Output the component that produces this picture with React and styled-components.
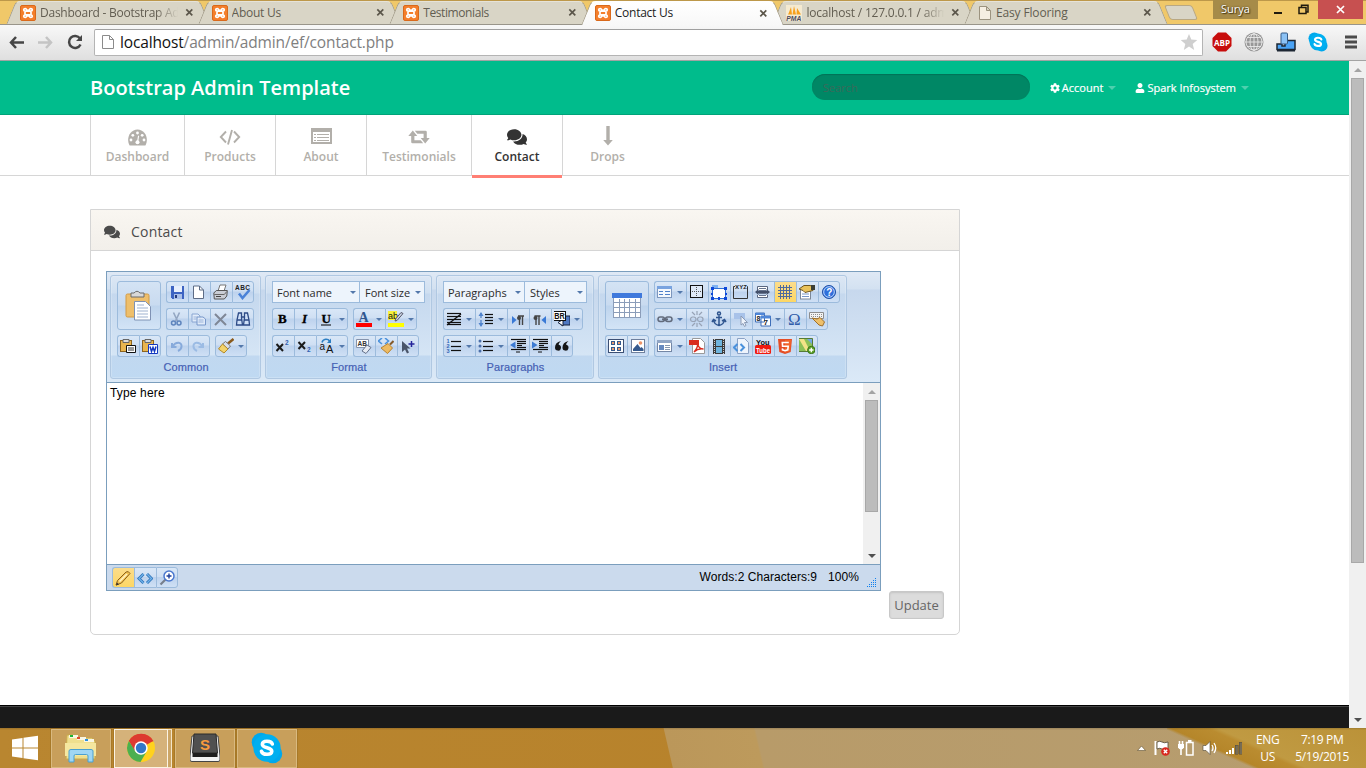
import React from "react";
import styled, { createGlobalStyle, css } from "styled-components";
import { FaComments, FaCog, FaUser } from "react-icons/fa";

const Global = createGlobalStyle`
  *, *::before, *::after { box-sizing: border-box; }
  body { margin: 0; overflow: hidden; background: #fff; font-family: "Open Sans", sans-serif; }
  svg { display: block; flex: none; }
`;

const Screen = styled.div`
  width: 1366px; height: 768px; display: flex; flex-direction: column; overflow: hidden;
`;

/* ---------- browser chrome ---------- */
const TabStrip = styled.div`
  height: 25px; flex: none; display: flex; align-items: flex-start; padding-left: 11px;
  background: #f0c869; border-top: 1px solid #bd984a; box-shadow: inset 0 -1px #99958a;
`;
const tabHalf = css`
  content: ""; position: absolute; z-index: -1; top: 0; bottom: 0; width: 60%;
  background: ${p => (p.$active ? "linear-gradient(#fff, #f8f8f8)" : "#d9d5c6")};
  border: 0 solid ${p => (p.$active ? "#a9a291" : "#a39d8c")}; border-top-width: 1px; border-top-color: ${p => (p.$active ? "#fff" : "#e6e3d8")};
`;
const Tab = styled.div`
  position: relative; z-index: ${p => (p.$active ? 2 : 1)}; isolation: isolate;
  width: 191.6px; height: ${p => (p.$active ? 24 : 23)}px; flex: none;
  display: flex; align-items: center; padding: 0 9px 0 9px; gap: 4px;
  color: ${p => (p.$active ? "#1c1c1c" : "#625d51")};
  &::before { ${tabHalf} left: 0; border-left-width: 1px; border-top-left-radius: 5px; transform: skewX(-22deg); }
  &::after { ${tabHalf} right: -2px; border-right-width: 1px; border-top-right-radius: 5px; transform: skewX(22deg); }
`;
const TabTitle = styled.span`
  flex: 1; min-width: 0; overflow: hidden; white-space: nowrap; font: 12px/16px "Open Sans", sans-serif;
  letter-spacing: ${p => p.$ls ?? -0.25}px;
  ${p => p.$fade && css`mask-image: linear-gradient(90deg, #000 82%, transparent 98%);`}
`;
const NewTab = styled.div`
  width: 28px; height: 15px; margin: 4px 0 0 6px; background: #d9d5c6; border: 1px solid #b9a883; border-radius: 3px;
  transform: skewX(22deg);
`;
const WindowControls = styled.div`
  margin: -1px 3px 0 auto; display: flex; height: 19px; align-items: stretch;
`;
const UserBadge = styled.div`
  width: 45px; margin-right: 15px; background: #a68b49; color: #fff; font: 11px/18px "Open Sans", sans-serif; text-align: center;
  text-shadow: 0 0 2px #4a3b14, 1px 1px 1px #4a3b14;
`;
const WindowButton = styled.div`
  width: ${p => p.$w}px; padding-left: ${p => p.$pl || 0}px; display: flex; align-items: center; justify-content: center; background: ${p => p.$bg || "transparent"};
`;
const Toolbar = styled.div`
  height: 36px; flex: none; display: flex; align-items: center; padding: 0 8px 1px;
  background: linear-gradient(#f8f8f8, #dfdfdf); border-bottom: 1px solid #a3a3a3;
`;
const NavButtons = styled.div`display: flex; gap: 12px; width: 86px; align-items: center;`;
const Omnibox = styled.div`
  width: 1109px; height: 27px; display: flex; align-items: center; padding: 0 4px 0 6px; background: #fff;
  border: 1px solid #b4b4b4; border-top-color: #a0a0a0; border-radius: 2px;
`;
const Url = styled.div`
  flex: 1; margin-left: 5px; font: 15.5px/24px "Open Sans", sans-serif; letter-spacing: -0.15px; color: #808080;
  b { font-weight: 400; color: #111; }
`;
const Extensions = styled.div`display: flex; align-items: center; margin-left: 9px; gap: 12px; > :last-child { margin-left: 4px; }`;

/* ---------- scrollbars ---------- */
const Scrollbar = styled.div`
  width: 17px; flex: none; display: flex; flex-direction: column; align-items: center; background: #f0f0f0;
`;
const ScrollArrow = styled.div`
  height: 17px; width: 100%; display: flex; align-items: center; justify-content: center;
  &::before { content: ""; border: 4px solid transparent;
    ${p => p.$down ? "border-top-color:#505050;border-bottom:0;" : "border-bottom-color:#a3a3a3;border-top:0;"} }
`;
const Thumb = styled.div`width: 13px; height: ${p => p.$h}px; background: #bcbcbc; border: 1px solid #a8a8a8;`;
const Filler = styled.div`flex: 1;`;

/* ---------- page ---------- */
const Viewport = styled.div`height: 667px; flex: none; display: flex;`;
const Page = styled.div`flex: 1; display: flex; flex-direction: column;`;
const Header = styled.header`
  height: 54px; flex: none; display: flex; align-items: center; padding: 0 100px 0 90px;
  background: #00bc8c; border-bottom: 1px solid #00a379; color: #fff;
`;
const Brand = styled.h1`margin: 0 auto 0 0; font: 600 20px/27px "Open Sans", sans-serif;`;
const SearchBox = styled.input.attrs({ placeholder: "Search" })`
  width: 218px; height: 26px; margin: -1px 20px 0 0; padding: 0 11px; border: 0; border-radius: 13px; background: #008765;
  box-shadow: inset 0 1px 1px #007357; font: 11px "Open Sans", sans-serif; outline: 0;
  &::placeholder { color: #3a6a5b; opacity: 1; }
`;
const UserLink = styled.div`
  display: flex; align-items: center; gap: 2px; margin-right: ${p => p.$mr || 0}px; white-space: nowrap;
  font: 11px/16px "Open Sans", sans-serif; letter-spacing: 0.01px; padding-top: 1px; -webkit-text-stroke: 0.2px #fff;
  &::after { content: ""; margin-left: 3px; border: 4px solid transparent; border-top-color: #4dd0ae; border-bottom: 0; }
`;
const MainNav = styled.nav`
  height: 61px; flex: none; display: flex; padding-left: 90px; border-bottom: 1px solid #d6d6d6;
`;
const NavItem = styled.a`
  position: relative; width: ${p => p.$w}px; height: 60px; padding-top: 11px;
  display: flex; flex-direction: column; align-items: center; border-left: 1px solid #d6d6d6;
  color: ${p => (p.$active ? "#333" : "#b2afaa")}; font: 600 12px/18px "Open Sans", sans-serif;
  ${p => p.$active && css`&::after { content: ""; position: absolute; left: 0; right: 0; top: 60px; height: 3px; background: #ff7f74; }`}
`;
const NavIcon = styled.span`height: 21px; margin-bottom: 1px; display: flex; align-items: center;`;
const Content = styled.main`flex: 1; padding: 33px 0 0 90px;`;
const Widget = styled.section`
  width: 870px; height: 426px; border: 1px solid #d5d5d5; border-radius: 0 0 5px 5px; display: flex; flex-direction: column;
`;
const WidgetHeader = styled.div`
  height: 41px; flex: none; display: flex; align-items: center; gap: 11px; padding: 3px 0 0 13px; color: #4b4b4b;
  background: linear-gradient(#f9f6f1, #f2efea); border-bottom: 1px solid #d5d5d5; font: 14px/20px "Open Sans", sans-serif; letter-spacing: 0.2px;
`;
const WidgetBody = styled.div`flex: 1; padding: 20px 15px 0; display: flex; flex-direction: column; align-items: flex-start;`;
const UpdateButton = styled.button`
  align-self: flex-end; width: 55px; height: 28px; padding: 0; background: #dcdcdc; border: 1px solid #c8c8c8; border-radius: 3px;
  box-shadow: inset 0 1px 2px #c4c4c4; color: #666; font: 13px/24px "Open Sans", sans-serif;
`;
const PageFooter = styled.footer`height: 23px; flex: none; background: #1a1a1a; border-top: 1px solid #000; box-shadow: inset 0 1px #444;`;

/* ---------- rich text editor ---------- */
const Editor = styled.div`width: 775px; height: 320px; border: 1px solid #7b9ebd; display: flex; flex-direction: column; font-family: "Liberation Sans", sans-serif;`;
const Ribbon = styled.div`
  height: 111px; flex: none; display: flex; align-items: flex-start; gap: 4px; padding: 3px;
  background: linear-gradient(#dfe9f5 0, #d3e1f1 17px, #c7d8ed 18px, #dbe9f7 100%);
  border-bottom: 1px solid #7b9ebd;
`;
const Group = styled.div`
  width: ${p => p.$w}px; height: 104px; padding: 5px 6px 0; border: 1px solid #b0c8e2; border-radius: 3px;
  display: flex; flex-direction: column; align-items: stretch;
  background: linear-gradient(#dce7f4 0, #cfdff1 17px, #c5d8ee 18px, #d5e5f5 79px, #c1d8f0 80px, #bfd9f2 100%);
  box-shadow: inset 0 0 0 1px #ffffff30;
`;
const GroupBody = styled.div`display: flex; gap: 5px;`;
const Column = styled.div`display: flex; flex-direction: column; gap: 5px;`;
const Row = styled.div`display: flex; gap: 5px; height: 22px;`;
const GroupLabel = styled.div`margin-top: 1px; text-align: center; color: #4560b4; font-size: 11px; line-height: 18px; letter-spacing: 0.1px; -webkit-text-stroke: 0.2px #4560b4; padding-left: 1px;`;
const Strip = styled.div`
  display: flex; height: ${p => p.$h || 22}px; border-radius: 3px;
  > :first-child { border-radius: 3px 0 0 3px; }
  > :last-child { border-right: 1px solid #9cbbdc; border-radius: 0 3px 3px 0; }
  > :only-child { border-radius: 3px; }
`;
const Tool = styled.div`
  width: ${p => (p.$menu ? 32 : 22)}px; height: 100%; display: flex; align-items: center; padding-left: 2px; gap: 4px;
  border: 1px solid #9cbbdc; border-right: 0;
  background: ${p => (p.$on ? "linear-gradient(#fbdc8b, #fdd765)" : "linear-gradient(#d9e7f7 0, #cfdff3 45%, #bdd2ed 50%, #cfe0f5 100%)")};
`;
const caret = css`
  &::after { content: ""; flex: none; border: 3px solid transparent; border-top-color: #5378ab; border-bottom: 0; }
`;
const MenuTool = styled(Tool).attrs({ $menu: true })`${caret}`;
const BigTool = styled.div`
  width: 44px; height: 49px; display: flex; align-items: center; justify-content: center; border: 1px solid #9cbbdc; border-radius: 3px;
  background: linear-gradient(#d4e3f4 0, #c9dbf0 48%, #bed4ed 52%, #d3e4f6 100%);
`;
const Combo = styled.div`
  width: ${p => p.$w}px; height: 22px; display: flex; align-items: center; justify-content: space-between; padding: 1px 3px 0 4px;
  border: 1px solid #9cbbdc; margin-right: -1px; background: #edf4fc; color: #2b2b2b; white-space: nowrap;
  font: 11px/16px "Open Sans", sans-serif; letter-spacing: 0;
  & + & { padding-left: 5px; }
  ${caret}
`;
const Combos = styled.div`display: flex;`;
const EditArea = styled.div`flex: 1; display: flex; justify-content: space-between; font-size: 12px; line-height: 20px; color: #000;`;
const EditText = styled.div`padding-left: 3px; letter-spacing: 0.15px;`;
const StatusBar = styled.div`
  height: 26px; flex: none; display: flex; align-items: flex-start; padding: 2px 3px 0 5px; background: #cbdaed; border-top: 1px solid #7b9ebd;
`;
const Counts = styled.div`margin: 0 11px 0 auto; font-size: 12px; line-height: 20px; letter-spacing: 0.05px;`;
const Zoom = styled(Counts)`margin: 0 8px 0 0;`;
const GripCorner = styled.div`margin-top: 11px;`;

/* ---------- taskbar ---------- */
const Taskbar = styled.div`
  height: 40px; flex: none; display: flex; align-items: center; position: relative;
  background:
    linear-gradient(#00000026, transparent 2px),
    linear-gradient(24deg, transparent calc(50% - 24px), #b5862a calc(50% - 21px), #ba8c30 calc(50% - 6px), #c09a42 calc(50% - 2px), #bb9238) right / 199px 40px no-repeat,
    linear-gradient(77deg, transparent 12px, #bb975a 13px, #bd9a5c 100px, #b89b69 102px, #b69d70) 660px 0 / 706px 40px no-repeat,
    linear-gradient(90deg, #b98630, #b7822b 60%, #bd872a 300px, #b98327 640px);
`;
const StartButton = styled.div`width: 51px; padding-right: 2px; display: flex; justify-content: center;`;
const TaskButton = styled.div`
  width: ${p => p.$w || 60}px; height: 39px; margin-right: ${p => (p.$mr ?? 2)}px; display: flex; align-items: center; justify-content: center;
  border: 1px solid ${p => (p.$on ? "#fbf3e3" : "#d9b980")}; background: ${p => (p.$on ? "#d5b27a" : "#c89f5b")};
  box-shadow: 0 0 0 1px #8f661f66;
`;
const StackEdge = styled.div`width: 4px; height: 39px; margin-right: 3px; border: 1px solid #f3e5c9; border-left: 0; background: #cca667;`;
const Tray = styled.div`
  margin-left: auto; display: flex; align-items: center; gap: 8px; color: #fff; padding-right: 17px;
`;
const TrayText = styled.div`
  font: 12px/17px "Open Sans", sans-serif; letter-spacing: -0.35px; text-align: center; white-space: nowrap; margin-left: ${p => p.$ml}px;
`;

/* ---------- glyphs ---------- */
const I = ({ s = 16, w, h, vb, children, ...rest }) => (
  <svg width={w || s} height={h || s} viewBox={vb || `0 0 ${w || s} ${h || s}`} fill="none" {...rest}>{children}</svg>
);
const G = p => <I s={16} {...p} />;
const Crisp = p => <I s={16} shapeRendering="crispEdges" {...p} />;

const Xampp = () => (
  <I>
    <rect x=".5" y=".5" width="15" height="15" rx="1.5" fill="#f47f2c" stroke="#d9691b" />
    <path d="M5.2 3.5C3.3 3.5 3.2 6 5 6.2h6C12.8 6 12.7 3.5 10.8 3.5 9.4 3.5 9.6 5.4 8 5.4S6.6 3.5 5.2 3.5zM5.2 12.5C3.3 12.5 3.2 10 5 9.8h6c1.8.2 1.7 2.7-.2 2.7-1.4 0-1.2-1.9-2.8-1.9s-1.4 1.9-2.8 1.9zM5 6v4M11 6v4" stroke="#fff" strokeWidth="1.7" />
  </I>
);
const Pma = () => (
  <I><rect width="16" height="16" fill="#f5ead0" /><path d="M2 9.500C3.500 7 4 4 5 2l1 7.500zM6.500 9.500 8 1l2 8.500zM10.500 9.500 11 3l4 6.500z" fill="#f7a01c" />
    <text x="0.3" y="15.500" fontSize="6.500" fontWeight="700" fontStyle="italic" fontFamily="Liberation Sans" fill="#4b4a5e" textLength="15" lengthAdjust="spacingAndGlyphs">PMA</text></I>
);
const PageIcon = ({ fill = "#fff", stroke = "#8b8b8b" }) => (
  <I w={14} h={16}><path d="M1.500 1.500h7l4 4v9h-11zM8.500 1.500v4h4" fill={fill} stroke={stroke} /></I>
);
const CloseX = () => <I s={9}><path d="M1.300 1.300l6 6M7.300 1.300l-6 6" stroke="#5c574b" strokeWidth="1.700" /></I>;
const Back = ({ c = "#464646", flip }) => (
  <I s={17}><path d={flip ? "M9 3l5 5.500L9 14M13.500 8.500H1" : "M8 3 3 8.500 8 14M3.500 8.500H16"} stroke={c} strokeWidth="2.500" /></I>
);
const Reload = () => <I s={18}><path d="M14.500 11.500A6 6 0 1 1 14 5.500" stroke="#464646" strokeWidth="2.500" /><path d="M16 2v6h-6z" fill="#464646" /></I>;
const Star = () => <I s={18}><path d="M9 1l2.300 5.600 6 .4-4.600 4 1.500 5.900L9 13.600 3.800 16.900 5.300 11 .7 7l6-.4z" fill="#cfcfcf" /></I>;
const Abp = () => (
  <I s={20}><path d="M6 .5h8l5.500 5.500v8L14 19.500H6L.5 14V6z" fill="#c70d0c" />
    <text x="2" y="13.500" fontSize="9" fontWeight="700" fontFamily="Open Sans" fill="#fff" textLength="16" lengthAdjust="spacingAndGlyphs">ABP</text></I>
);
const Globe = () => (
  <I s={20}><circle cx="10" cy="10" r="9.500" fill="#979797" /><g stroke="#e9e9e9" strokeWidth=".9"><ellipse cx="10" cy="10" rx="4" ry="8.500" /><circle cx="10" cy="10" r="8" /><path d="M10 1v18M1 10h18M3 5.500h14M3 14.500h14" /></g></I>
);
const PhonePc = () => (
  <I s={20}><path d="M1 12h5v2h3V8.500h10v9H1z" fill="#4aa3f5" stroke="#1d2733" strokeWidth="1.500" /><rect x="5" y="1" width="6.500" height="11" rx="1" fill="#8cc2f5" stroke="#355a86" /><path d="M1 18.500h18" stroke="#1d2733" strokeWidth="2" /></I>
);
const SkypeMark = ({ size }) => (
  <I w={size} h={size} vb="0 0 30 30"><circle cx="9.500" cy="9.500" r="8.800" fill="#00a8ec" /><circle cx="20.500" cy="20.500" r="8.800" fill="#00a8ec" /><circle cx="15" cy="15" r="12.800" fill="#00aff0" />
    <path d="M20 11.200C19 8 11 7.500 10.600 11.400c-.3 4.400 9.300 2.400 8.900 6.800-.3 3.800-8.700 3.600-9.700-.2" stroke="#fff" strokeWidth="3.300" strokeLinecap="round" /></I>
);
const Burger = () => <I w={14} h={14}><path d="M1 2h12M1 7h12M1 12h12" stroke="#4b4b4b" strokeWidth="3" /></I>;

const Gauge = () => (
  <I w={22} h={18}><path d="M2.300 17C-1 10.500 3 1.500 10.500 1.500S22 10.500 18.700 17q-.3.500-.9.500H3.200q-.6 0-.9-.5z" fill="#b2afaa" />
    <g fill="#fff"><circle cx="4" cy="12" r="1.400" /><circle cx="5.800" cy="7.300" r="1.400" /><circle cx="10.500" cy="5" r="1.400" /><circle cx="15.200" cy="7.300" r="1.400" /><circle cx="17" cy="12" r="1.400" /><circle cx="10.500" cy="14.300" r="2" /><path d="M11.100 7.600l1 .3-1 6.500-1.200-.2z" /></g></I>
);
const CodeMark = () => <I w={22} h={18}><path d="M7 3.500 1.800 9 7 14.500M15 3.500 20.200 9 15 14.500M13 2 9 16.500" stroke="#b2afaa" strokeWidth="1.900" /></I>;
const ListAlt = () => (
  <Crisp w={21} h={20}><path d="M0 1h21v16H0z" fill="#b2afaa" /><path d="M2 5h17v10H2z" fill="#fff" /><path d="M3 7.500h2M6 7.500h12M3 10.500h2M6 10.500h12M3 13.500h2M6 13.500h12" stroke="#b2afaa" strokeWidth="1" /></Crisp>
);
const Retweet = () => (
  <I w={22} h={16}><path d="M4.800 1.500 9.300 7H6.400v4.300h6.300l2.500 3H4.600q-1.400 0-1.400-1.300V7H.3zM17.200 14.500 12.700 9h2.900V4.700H9.300l-2.500-3h10.600q1.400 0 1.400 1.300v6h2.900z" fill="#b2afaa" /></I>
);
const ArrowDown = () => <I w={10} h={21}><path d="M3.300 0h3.400v14H9.800L5 19.500.2 14h3.100z" fill="#b2afaa" /></I>;

const Paste = () => (
  <I s={32}><rect x="3" y="4" width="23" height="23" rx="1.500" fill="#eebf6c" stroke="#d29a45" /><path d="M8 3h3q3-3.500 6 0h4v4H8z" fill="#d8d8d8" stroke="#6b6b6b" />
    <path d="M11.500 11.500h11l5 5V30h-16z" fill="#fff" stroke="#7f92b4" /><path d="M14 15h7M14 18h11M14 21h11M14 24h11M14 27h11" stroke="#9fb2cf" /></I>
);
const Save = () => <Crisp><path d="M2 2h13v13H3l-1-1z" fill="#3c63c2" /><path d="M5 2h8v6H5z" fill="#e7effc" /><path d="M5 10h8v5H5z" fill="#a9bfe8" /><path d="M6 11h2v3H6z" fill="#24397c" /></Crisp>;
const NewDoc = () => <G><path d="M2.500 2h6l4 4v8.500h-10z" fill="#fff" stroke="#5d6c86" /><path d="M8.500 2v4h4" stroke="#5d6c86" /></G>;
const Print = () => <G><path d="M5 7l2-6h6l-2 6z" fill="#fff" stroke="#777" /><path d="M.8 9 3.300 6.500h11L13.800 12l-2.500 3H1.300z" fill="#c9cdd5" stroke="#555" /><path d="M1.300 10.500h10l2.500-3" stroke="#666" /><path d="M3 12.500h5" stroke="#444" /></G>;
const Spell = () => <G><text x="0" y="6" fontSize="6.500" fontWeight="700" fontFamily="Liberation Sans" fill="#222" textLength="15">ABC</text><path d="M4 9.500l3.500 4.500L14.500 6" stroke="#4a82d8" strokeWidth="2.600" /></G>;
const Cut = () => <G><path d="M4.500 1.500 8.500 10M10.500 1.500 6.500 10" stroke="#93a6c2" strokeWidth="1.600" /><circle cx="4.500" cy="12" r="2" stroke="#5e84bd" strokeWidth="1.500" /><circle cx="10" cy="12" r="2" stroke="#5e84bd" strokeWidth="1.500" /></G>;
const Copy = () => <G fillOpacity=".8"><path d="M1 3h6l2 2v6H1z" fill="#e6effb" stroke="#8aa6d2" /><path d="M6 6h6l2.500 2v6H6z" fill="#e6effb" stroke="#7796c9" /><path d="M2.500 6h4M2.500 8h3M7.500 9h5M7.500 11h5" stroke="#9cb4da" /></G>;
const Delete = () => <G><path d="M2 3l11 11M13 3 2 14" stroke="#7f8796" strokeWidth="2" /></G>;
const Find = () => <G><path d="M3.500 2h3v5l1 7h-6l.5-5zM12.500 2h-3v5l-1 7h6l-.5-5z" fill="#cfe0f8" stroke="#2c4a86" strokeWidth="1.300" /><path d="M2 9h5M9 9h5M6 6h4" stroke="#2c4a86" strokeWidth="1.500" /></G>;
const PasteBase = ({ children }) => <G><rect x=".5" y="2.500" width="11" height="11" fill="#e9b54f" stroke="#8c6420" /><path d="M3 1.500h6v3H3z" fill="#ddd" stroke="#666" />{children}</G>;
const PasteText = () => <PasteBase><path d="M6.500 7.500h9v7h-9z" fill="#fff" stroke="#111" /><path d="M8 10h6M8 12h6" stroke="#333" /></PasteBase>;
const PasteWord = () => <PasteBase><path d="M6.500 6.500h9v9h-9z" fill="#fff" stroke="#1438c0" /><path d="M8 8.500l1.500 5 1.500-4 1.500 4 1.500-5" stroke="#1438c0" strokeWidth="1.500" /></PasteBase>;
const Undo = () => <G><path d="M3 5v4h4.500M3.500 8.500C7 3 13 4 12.500 8.500c0 2-1.500 3.500-3.500 4.500" stroke="#87aadb" strokeWidth="2" /></G>;
const Redo = () => <G><path d="M12 5v4H7.500M11.500 8.500C8 3 2 4 2.500 8.500c0 2 1.500 3.500 3.500 4.500" stroke="#9bbbe4" strokeWidth="2" /></G>;
const Brush = () => <G><path d="M15.500 1 10 5.500" stroke="#8a5a1d" strokeWidth="2.500" /><path d="M7.500 3.500l5 4.500-2.500 3-5.500-5z" fill="#d8dde8" stroke="#777" /><path d="M4.500 6l5.500 5-4 4L.5 11z" fill="#f3d36c" stroke="#b38a2b" /></G>;
const Glyph = ({ x = 3, y = 13, size = 14, fill = "#000", italic, weight = 700, family = "Liberation Serif", children, extra }) => (
  <G><text x={x} y={y} fontSize={size} fontWeight={weight} fontStyle={italic ? "italic" : undefined} fontFamily={family} fill={fill} stroke={weight > 600 ? fill : undefined} strokeWidth=".3">{children}</text>{extra}</G>
);
const Bold = () => <Glyph y={12} size={13}>B</Glyph>;
const Italic = () => <Glyph x={5} y={12} size={13} italic>I</Glyph>;
const Under = () => <Glyph x={2.500} y={11.500} size={13} extra={<path d="M2 14h10" stroke="#000" />}>U</Glyph>;
const FontColor = () => <G><text x="2.500" y="11" fontSize="14" fontWeight="700" fontFamily="Liberation Serif" fill="#2f568f">A</text><path d="M0 12h16v4H0z" fill="#f00" /></G>;
const Hilite = () => <G><path d="M0 0h9v9H0z" fill="#f6f13c" /><text x="0" y="7.500" fontSize="9" fontFamily="Liberation Sans" fill="#111">ab</text><path d="M15 2.500 9 9.500l-2 .5 1-2.500 5-6z" fill="#ccd6e6" stroke="#556" /><path d="M0 12h16v4H0z" fill="#ff0" /></G>;
const Sup = () => <G><path d="M1.500 6 8 13M8 6l-6.500 7" stroke="#1b1b1b" strokeWidth="2" /><text x="10" y="6.500" fontSize="6.500" fontWeight="700" fontFamily="Liberation Sans" fill="#315fb0">2</text></G>;
const Sub = () => <G><path d="M1.500 4 8 11M8 4l-6.500 7" stroke="#1b1b1b" strokeWidth="2" /><text x="10" y="14" fontSize="6.500" fontWeight="700" fontFamily="Liberation Sans" fill="#315fb0">2</text></G>;
const CaseIcon = () => <G><text x="0.500" y="12" fontSize="10" fontFamily="Liberation Sans" fill="#111">a</text><text x="7" y="14.500" fontSize="11" fontFamily="Liberation Sans" fill="#111">A</text><path d="M3 4.500C4 .5 9 .5 10.500 3" stroke="#2c7fc4" strokeWidth="1.500" /><path d="M12 .5V5H8z" fill="#2c7fc4" /></G>;
const Eraser = () => <G><path d="M.5 1.500h12v8H.5z" fill="#fff" stroke="#8593ab" /><text x="1.500" y="7.500" fontSize="6.500" fontWeight="700" fontFamily="Liberation Sans" fill="#333">AB</text><path d="M6 13l5-6 4 2.500-5 6z" fill="#e6ebf3" stroke="#64718a" /></G>;
const Broom = () => <G><path d="M4 0 .5 3 4 6M7 0l3.500 3L7 6" stroke="#4a91dc" strokeWidth="1.600" /><path d="M15.500 3 12 6.500" stroke="#855a2a" strokeWidth="2" /><path d="M10 5.500l4.500 4.500-5 5.500L3 10z" fill="#edba62" stroke="#b98330" /></G>;
const SelectAdd = () => <G><path d="M2 3v11l3-2.500 2 4 2-1-2-4h3.500z" fill="#4a5569" /><path d="M11.500 3v6M8.500 6h6" stroke="#24249a" strokeWidth="1.500" /></G>;
const lines = (ys, x1, x2, c = "#111") => ys.map(y => <path key={y} d={`M${x1} ${y}.5H${x2}`} stroke={c} strokeWidth="1.200" />);
const Justify = () => <G>{lines([2, 5, 8, 11, 13], 1, 15)}<path d="M1 14 15 3" stroke="#111" strokeWidth="1.300" /></G>;
const LineHeight = () => <G><path d="M3 2v5M3 9v6" stroke="#4f83cc" strokeWidth="1.300" /><path d="M.5 5 3 1l2.500 4zM.5 12 3 16l2.500-4z" fill="#4f83cc" />{lines([3, 6, 9, 12], 7, 15)}</G>;
const Ltr = () => <G><path d="M2 5l4.500 4L2 13z" fill="#3979d6" /><path d="M9.500 5v9M12.500 5v9M8 5h6" stroke="#444" strokeWidth="1.400" /><circle cx="9" cy="7" r="2" fill="#444" /></G>;
const Rtl = () => <G><path d="M14 5 9.500 9l4.500 4z" fill="#3979d6" /><path d="M4 5v9M7 5v9M2.500 5h6" stroke="#444" strokeWidth="1.400" /><circle cx="3.500" cy="7" r="2" fill="#444" /></G>;
const Br = () => <G><path d="M11 5h5v9H7l2-4z" fill="#4f78c2" stroke="#16233f" /><path d="M9 8.500V15l-5-3.500z" fill="#fff" stroke="#16233f" /><rect x="-.5" y="0.500" width="12" height="9" fill="#fff" stroke="#111" /><text x="0.300" y="8.300" fontSize="9" fontWeight="700" fontFamily="Liberation Sans" fill="#111" textLength="10.500" lengthAdjust="spacingAndGlyphs">BR</text></G>;
const OList = () => <G>{[4, 9, 14].map((y, i) => <text key={y} x="0.500" y={y + 1} fontSize="5.500" fontWeight="700" fontFamily="Liberation Sans" fill="#3468b8">{i + 1}</text>)}{lines([3, 8, 12], 5, 15)}</G>;
const UList = () => <G>{[3, 8, 13].map(y => <circle key={y} cx="2" cy={y} r="1.500" fill="#4a6ea9" />)}{lines([3, 8, 12], 5, 15)}</G>;
const Indent = ({ out }) => <G>{lines([1, 11], 1, 16)}{lines([3, 5, 9], 7, 16)}{lines([7], 7, 12)}<path d={out ? "M5.500 3.500v7L0 7z" : "M0 3.500v7L5.500 7z"} fill="#3c7ad2" /><path d="M6 14h4" stroke="#111" /></G>;
const Quote = () => <G><path d="M7 3C3 4 1 6 1 9.500a3 3 0 1 0 3.700-2.800C4.600 5.500 5.500 4.500 7 3zM14.500 3c-4 1-6 3-6 6.500a3 3 0 1 0 3.700-2.800c-.1-1.200.8-2.200 2.300-3.700z" fill="#151515" /></G>;
const BigTable = () => <Crisp w={32} h={32}><path d="M2 4h28v24H2z" fill="#fff" /><path d="M2.500 5v22.500h27V5M2 12.500h28M2 17.500h28M2 22.500h28M8.500 9v19M13.500 9v19M18.500 9v19M24.500 9v19" stroke="#8b9db9" /><path d="M1 3h30v5H1z" fill="#3f79dc" /></Crisp>;
const Form = () => <Crisp><path d="M.5 2.500h14v11H.5z" fill="#f4f8fd" stroke="#7c96bd" /><path d="M0 2h15v3H0z" fill="#79a3df" /><path d="M2 7.500h4M2 10.500h4M8 7.500h5M8 10.500h5" stroke="#4f80c9" strokeWidth="1" /></Crisp>;
const Border = () => <Crisp><path d="M1.500 1.500h12v12h-12z" fill="#dfe9f6" stroke="#111" /><path d="M7.500 3v10M3 7.500h10" stroke="#555" strokeDasharray="1 1" /></Crisp>;
const LayerBox = () => <Crisp><path d="M1.500 4.500h13v10h-13z" fill="#fff" stroke="#2e6ed6" /><path d="M1 1h6v3H1z" fill="#7db1f2" /><g fill="#0d47d9"><path d="M0 3h3v3H0zM13 3h3v3h-3zM0 13h3v3H0zM13 13h3v3h-3zM7 13h2v3H7zM0 9h2v2H0zM14 9h2v2h-2z" /></g></Crisp>;
const Fieldset = () => <G><path d="M2 2.500H.5v12h14v-12H14" stroke="#333" /><text x="2" y="4.500" fontSize="6" fontWeight="700" fontFamily="Liberation Sans" fill="#222" textLength="12">XYZ</text></G>;
const PageBreak = () => <G><path d="M2.500 6V2.500h10V6M2.500 11v2.500h10V11" stroke="#5a6780" fill="#fff" /><path d="M4 4.500h7M4 6.500h7M4 9.500h7M4 11.500h7" stroke="#67758f" /><path d="M0 8 3.500 5v2h8V5L15 8l-3.500 3V9h-8v2z" fill="#43506a" /></G>;
const Grid = () => <Crisp><path d="M3.500 1v14M6.500 1v14M9.500 1v14M12.500 1v14M1 3.500h14M1 6.500h14M1 9.500h14M1 12.500h14" stroke="#506a9c" /></Crisp>;
const Props = () => <G><rect x="1.500" y="4.500" width="10" height="10.500" fill="#fff" stroke="#7c8798" /><path d="M3 10h7M3 12.500h7" stroke="#7896c8" /><path d="M0 5l5-3.500 6 0 3 1v4l-4 1-4 1-2-2z" fill="#e9c25a" stroke="#6c5420" /><path d="M12 1h4v5h-4z" fill="#3b3f36" /></G>;
const Help = () => <G><circle cx="8" cy="8" r="6.500" fill="#2f6fdb" stroke="#1f4fa5" /><circle cx="8" cy="8" r="5.300" stroke="#bcd5fb" /><text x="5.300" y="11.800" fontSize="10" fontWeight="700" fontFamily="Liberation Sans" fill="#fff">?</text></G>;
const Link = () => <G stroke="#626b7c" strokeWidth="1.500"><rect x="1" y="6" width="6.500" height="4.500" rx="2.200" /><rect x="8.500" y="6" width="6.500" height="4.500" rx="2.200" /><path d="M5 8.300h6" strokeWidth="1.800" /></G>;
const Unlink = () => <G stroke="#97a3b6" strokeWidth="1.200"><rect x="1.500" y="6" width="5.500" height="4.500" rx="2.200" /><rect x="8.500" y="6" width="5.500" height="4.500" rx="2.200" /><path d="M8 0v4M3 1l3 3M13 1l-3 3M8 12v4M3 15l3-3M13 15l-3-3" /></G>;
const Anchor = () => <G stroke="#2f558f" strokeWidth="1.500"><circle cx="8" cy="2.500" r="1.500" /><path d="M8 4.500V14M5 6.500h6M2.500 9C3 12.500 5.500 14 8 14.500c2.500-.5 5-2 5.500-5.500M1 11l1.500-2.500L5 10M15 11l-1.500-2.500L11 10" /></G>;
const Hotspot = () => <G><path d="M1 2h11v6H1z" fill="#a8c2e9" /><path d="M8 5v9l2-1.500 1.500 3 1.500-1-1.500-3h3z" fill="#eef3fb" stroke="#8c9cb6" /></G>;
const DateIcon = () => <G><path d="M.5 2h9v9H.500zM6 5h9.500v10H6z" fill="#fff" stroke="#3f6fb9" /><path d="M.5 2h9v2H.500zM6 5h9.500v2.500H6z" fill="#4e86d8" /><text x="1.500" y="10" fontSize="7" fontWeight="700" fontFamily="Liberation Sans" fill="#222">8</text><text x="8.800" y="14.300" fontSize="7.500" fontWeight="700" fontFamily="Liberation Sans" fill="#222">7</text></G>;
const Omega = () => <Glyph x={1} y={14} size={17} weight={400} fill="#315ca8">Ω</Glyph>;
const Keyboard = () => <G><path d="M.5 1.500h14v6H.5z" fill="#f3f3f3" stroke="#8d8d8d" /><path d="M2 3.500h12M2 5.500h12" stroke="#8d8d8d" strokeDasharray="1 1" /><path d="M3 7l5 1 3-1.500 4.500 4.500-2 4-3.500-1z" fill="#eec06b" stroke="#a06f28" /></G>;
const Thumbs = () => <Crisp><path d="M.5 1.500h15v13H.5z" fill="#fff" stroke="#3b4f74" /><g fill="#35598d"><path d="M3 3h4v4H3zM9 3h4v4H9zM3 9h4v4H3zM9 9h4v4H9z" /></g><g fill="#e89a72"><path d="M4 4h2v2H4zM10 4h2v2h-2zM4 10h2v2H4zM10 10h2v2h-2z" /></g></Crisp>;
const Picture = () => <G><rect x="1.500" y="1.500" width="13" height="13" fill="#fff" stroke="#6e7f9c" /><path d="M3 13V11l4.500-5 3 4 1-1 2 2v2z" fill="#35598d" /><circle cx="10.500" cy="5" r="1.800" fill="#ec9469" /></G>;
const Template = () => <Crisp><path d="M.5 2.500h14v11H.5z" fill="#fff" stroke="#7487a5" /><path d="M0 2h15v3H0z" fill="#90a5c5" /><path d="M2 7h5v5H2z" fill="#6689bf" /><path d="M8 7.500h5M8 9.500h5M8 11.500h5" stroke="#8797b0" /></Crisp>;
const Pdf = () => <G><path d="M3.500.5h8l4 4v11h-12z" fill="#fff" stroke="#9a9a9a" /><path d="M0 2h10v5H0z" fill="#d92b1f" /><path d="M5 14c3-3 4-6 3.500-9 .5 4 3 6 6 6-4-.5-7 .5-9.500 3z" stroke="#d92b1f" strokeWidth="1.300" /></G>;
const Film = () => <Crisp><path d="M2 1h12v15H2z" fill="#3b3b3b" /><path d="M5 2h6v6H5zM5 9h6v6H5z" fill="#6fb4dd" /><path d="M3.500 1v15M12.500 1v15" stroke="#cfcfcf" strokeDasharray="1 1" /></Crisp>;
const CodeDoc = () => <G><path d="M4.500.5h7l4 4v11h-11z" fill="#eef4fc" stroke="#8ba2c5" /><path d="M4.500 6 1 9.500 4.500 13M7.500 6 11 9.500 7.500 13" stroke="#4a91dc" strokeWidth="2" /></G>;
const YouTube = () => <G><text x="1" y="6.500" fontSize="8" fontWeight="700" fontFamily="Liberation Sans" fill="#111" textLength="13.500" lengthAdjust="spacingAndGlyphs">You</text><rect x="0" y="7" width="16" height="9" rx="1.500" fill="#f01a10" /><text x="1" y="14.500" fontSize="8" fontWeight="700" fontFamily="Liberation Sans" fill="#fff" textLength="14" lengthAdjust="spacingAndGlyphs">Tube</text></G>;
const Html5 = () => <G><path d="M1 1h14l-1.300 13L8 16l-5.700-2z" fill="#e44d26" /><path d="M8 2h6l-1 11-5 1.700z" fill="#f16529" /><path d="M11.800 4.500H5.300l.3 3.700h5.600l-.4 3.600L8 12.700l-2.500-.9-.1-1.400" stroke="#fff" strokeWidth="1.600" /></G>;
const MapIcon = () => <G><path d="M-.5.5h14v13h-14z" fill="#8bc057" stroke="#557b36" /><path d="M0 1h5l6 12H7z" fill="#f3e387" /><path d="M8 1h5v5z" fill="#74a7e0" /><circle cx="12.300" cy="12" r="3.700" fill="#5ea32c" stroke="#3b7417" /><path d="M12.300 9.800v4.400M10.100 12h4.400" stroke="#fff" strokeWidth="1.300" /></G>;
const Pencil = () => <G><path d="M1 15 2.500 10.500 11 2q2.500-1.500 4 1.500L6.500 13z" fill="#f3c454" stroke="#8a5f1d" /><path d="M4.500 11.500 12 4" stroke="#fff3c7" strokeWidth="1.600" /><path d="M1 15.500l1-3 2 2z" fill="#333" /></G>;
const CodeView = () => <G><path d="M6.500 4 2 8.500 6.500 13M10 4l4.500 4.500L10 13" stroke="#2f73b8" strokeWidth="3" /><path d="M6.500 4 2 8.500 6.500 13M10 4l4.500 4.500L10 13" stroke="#6fb2ea" strokeWidth="1.300" /></G>;
const Magnify = () => <G><path d="M6.500 9.500 1.500 14.500" stroke="#777f8d" strokeWidth="2.200" /><circle cx="10" cy="6" r="5" fill="#fff" stroke="#4a78cf" strokeWidth="1.500" /><path d="M10 3.500v5M7.500 6h5" stroke="#1f3f9b" strokeWidth="1.400" /></G>;
const ResizeGrip = () => <Crisp s={10}>{[0, 1, 2, 3, 4].map(r => [0, 1, 2, 3, 4].filter(c => c >= 4 - r).map(c => <rect key={`${r}${c}`} x={c * 2} y={r * 2} width="1" height="1" fill="#0f7fee" />))}</Crisp>;

const Windows = () => <I w={28} h={26}><path d="M1 4.500 11.500 3v9.500H1zM12.500 2.800 27 .7v11.800H12.500zM1 13.500h10.500V23L1 21.500zM12.500 13.500H27v11.800L12.500 23.200z" fill="#fff" /></I>;
const Explorer = () => <I w={34} h={30}><path d="M3 2h9l2 3h14l3 3v18H2z" fill="#efdf8e" stroke="#c9ab4d" /><path d="M5 2h9v3H5zM13 4h9v3h-9zM20 6h10v3H20z" fill="#f9f6e4" /><path d="M6 2h3v2H6z" fill="#1fb335" /><path d="M13 4h3v2h-3z" fill="#df4a2b" /><path d="M21 6h3v2h-3z" fill="#2d8fdd" /><path d="M1 10h31v13H1z" fill="#f5e79f" /><path d="M5 29V18q0-1.500 2-1.500h20q2 0 2 1.500v11h-5v-6q0-1.500-1.500-1.500h-11Q10 21.500 10 23v6z" fill="#9fd6f3" stroke="#4aa0cf" /></I>;
const Chrome = () => (
  <I s={30}><circle cx="15" cy="15" r="14" fill="#ffd21e" /><path d="M15 15 2.880 8A14 14 0 0 1 27.120 8z" fill="#dd3a30" /><path d="M15 8.300h12.500A14 14 0 0 0 2.880 8l6 10.500z" fill="#dd3a30" /><path d="M2.880 8A14 14 0 0 0 14.500 29L20.800 18.300 15 21.500 9.200 18.300z" fill="#4caf50" /><circle cx="15" cy="15" r="6.700" fill="#fff" /><circle cx="15" cy="15" r="5.200" fill="#3277c8" /></I>
);
const Sublime = () => <I s={30}><path d="M2 3h26l2 20v4q0 1.500-2 1.500H2Q0 28.500 0 27v-4z" fill="#f3f3f3" stroke="#444" /><path d="M4 1h22l1.500 19H2.500z" fill="#505050" stroke="#2a2a2a" /><path d="M2.500 20h25v4h-25z" fill="#1e1e1e" /><text x="10" y="16.500" fontSize="15" fontWeight="700" fontFamily="Liberation Sans" fill="#f79a3d">S</text></I>;

const Up = () => <I w={9} h={6}><path d="M.5 5.500 4.500 1l4 4.500z" fill="#fff" stroke="#5f5030" strokeWidth=".6" /></I>;
const Flag = () => <I s={16}><path d="M1.500 1v14" stroke="#fff" strokeWidth="2" /><path d="M3 2q3-1.500 5 0t6 0v7q-4 1.500-6 0t-5 0z" fill="#fff" stroke="#4d4431" strokeWidth=".8" /><circle cx="11.500" cy="11.500" r="4.300" fill="#d9281f" /><path d="M9.800 9.800l3.400 3.400M13.200 9.800l-3.400 3.400" stroke="#fff" strokeWidth="1.400" /></I>;
const Power = () => <I w={16} h={16}><path d="M1.500 1v3M4.500 1v3M3 8v7" stroke="#fff" strokeWidth="1.600" /><path d="M0 4h6v3.500Q5 9.500 3 9.500T0 7.500z" fill="#fff" /><rect x="8.500" y="2.500" width="6.500" height="12.500" stroke="#fff" strokeWidth="1.500" /><path d="M10 1h3.500" stroke="#fff" strokeWidth="2" /></I>;
const Volume = () => <I w={16} h={16}><path d="M1 5.500h3L8 1.500v13L4 10.500H1z" fill="#fff" stroke="#4d4431" strokeWidth=".6" /><path d="M10 5q2 3 0 6M12 3q3.500 5 0 10" stroke="#fff" strokeWidth="1.300" /></I>;
const Signal = () => <Crisp w={16} h={14}><path d="M0 11h2v2H0zM3 9h2v4H3zM6 7h2v6H6z" fill="#fff" /><path d="M9 4h3v9H9zM13 1h3v12h-3z" fill="#776c55" stroke="#574c35" strokeWidth=".5" /></Crisp>;

const TABS = [
  ["Dashboard - Bootstrap Admin", <Xampp />, true],
  ["About Us", <Xampp />],
  ["Testimonials", <Xampp />],
  ["Contact Us", <Xampp />, false, true],
  ["localhost / 127.0.0.1 / admin", <Pma />, true],
  ["Easy Flooring", <PageIcon fill="#f6efe2" stroke="#9c937f" />],
];
const TITLE_SPACING = { "Testimonials": -0.4, "localhost / 127.0.0.1 / admin": -0.2, "Easy Flooring": -0.15 };
const NAV = [
  ["Dashboard", 94, <Gauge />], ["Products", 91, <CodeMark />], ["About", 91, <ListAlt />],
  ["Testimonials", 105, <Retweet />], ["Contact", 91, <FaComments size={20} />, true], ["Drops", 90, <ArrowDown />],
];

// Plain entries are icons; m() adds a drop-down arrow and on() marks a pressed button.
const m = icon => ({ icon, menu: true });
const on = icon => ({ icon, on: true });
const Tools = ({ items, h }) => (
  <Strip $h={h}>
    {items.map((it, i) => {
      const o = React.isValidElement(it) ? { icon: it } : it;
      return o.menu ? <MenuTool key={i}>{o.icon}</MenuTool> : <Tool key={i} $on={o.on}>{o.icon}</Tool>;
    })}
  </Strip>
);

const EditorRibbon = () => (
  <Ribbon>
    <Group $w={151}>
      <GroupBody>
        <Column><BigTool><Paste /></BigTool><Tools items={[<PasteText />, <PasteWord />]} /></Column>
        <Column>
          <Tools items={[<Save />, <NewDoc />, <Print />, <Spell />]} />
          <Tools items={[<Cut />, <Copy />, <Delete />, <Find />]} />
          <Row><Tools items={[<Undo />, <Redo />]} /><Tools items={[m(<Brush />)]} /></Row>
        </Column>
      </GroupBody>
      <GroupLabel>Common</GroupLabel>
    </Group>
    <Group $w={167}>
      <Column>
        <Combos><Combo $w={88}>Font name</Combo><Combo $w={66}>Font size</Combo></Combos>
        <Row><Tools items={[<Bold />, <Italic />, m(<Under />)]} /><Tools items={[m(<FontColor />), m(<Hilite />)]} /></Row>
        <Row><Tools items={[<Sup />, <Sub />, m(<CaseIcon />)]} /><Tools items={[<Eraser />, <Broom />, <SelectAdd />]} /></Row>
      </Column>
      <GroupLabel>Format</GroupLabel>
    </Group>
    <Group $w={158}>
      <Column>
        <Combos><Combo $w={82}>Paragraphs</Combo><Combo $w={63}>Styles</Combo></Combos>
        <Tools items={[m(<Justify />), m(<LineHeight />), <Ltr />, <Rtl />, m(<Br />)]} />
        <Tools items={[m(<OList />), m(<UList />), <Indent out />, <Indent />, <Quote />]} />
      </Column>
      <GroupLabel>Paragraphs</GroupLabel>
    </Group>
    <Group $w={249}>
      <GroupBody>
        <Column><BigTool><BigTable /></BigTool><Tools items={[<Thumbs />, <Picture />]} /></Column>
        <Column>
          <Tools items={[m(<Form />), <Border />, <LayerBox />, <Fieldset />, <PageBreak />, on(<Grid />), <Props />, <Help />]} />
          <Tools items={[m(<Link />), <Unlink />, <Anchor />, <Hotspot />, m(<DateIcon />), <Omega />, <Keyboard />]} />
          <Tools items={[m(<Template />), <Pdf />, <Film />, <CodeDoc />, <YouTube />, <Html5 />, <MapIcon />]} />
        </Column>
      </GroupBody>
      <GroupLabel>Insert</GroupLabel>
    </Group>
  </Ribbon>
);

export default function App() {
  return (
    <Screen>
      <Global />
      <TabStrip>
        {TABS.map(([title, icon, fade, active]) => (
          <Tab key={title} $active={active}>{icon}<TabTitle $fade={fade} $ls={TITLE_SPACING[title]}>{title}</TabTitle><CloseX /></Tab>
        ))}
        <NewTab />
        <WindowControls>
          <UserBadge>Surya</UserBadge>
          <WindowButton $w={10}><I s={10}><path d="M1 8h8" stroke="#1f1a0e" strokeWidth="2" /></I></WindowButton>
          <WindowButton $w={35} $pl={6}><I w={11} h={11}><path d="M1 3.500h7v6H1zM3.500 3V1.200H10V8H8" stroke="#1f1a0e" strokeWidth="1.500" /></I></WindowButton>
          <WindowButton $w={45} $bg="#c75050"><I s={9}><path d="M1 1l7 7M8 1 1 8" stroke="#fff" strokeWidth="1.700" /></I></WindowButton>
        </WindowControls>
      </TabStrip>
      <Toolbar>
        <NavButtons><Back /><Back c="#c4c4c4" flip /><Reload /></NavButtons>
        <Omnibox><PageIcon /><Url><b>localhost</b>/admin/admin/ef/contact.php</Url><Star /></Omnibox>
        <Extensions><Abp /><Globe /><PhonePc /><SkypeMark size={20} /><Burger /></Extensions>
      </Toolbar>
      <Viewport>
        <Page>
          <Header>
            <Brand>Bootstrap Admin Template</Brand>
            <SearchBox />
            <UserLink $mr={19}><FaCog size={10} />Account</UserLink>
            <UserLink><FaUser size={10} />Spark Infosystem</UserLink>
          </Header>
          <MainNav>
            {NAV.map(([label, w, icon, active]) => (
              <NavItem key={label} $w={w} $active={active}><NavIcon>{icon}</NavIcon>{label}</NavItem>
            ))}
          </MainNav>
          <Content>
            <Widget>
              <WidgetHeader><FaComments size={16} />Contact</WidgetHeader>
              <WidgetBody>
                <Editor>
                  <EditorRibbon />
                  <EditArea>
                    <EditText>Type here</EditText>
                    <Scrollbar><ScrollArrow /><Thumb $h={112} /><Filler /><ScrollArrow $down /></Scrollbar>
                  </EditArea>
                  <StatusBar>
                    <Tools h={21} items={[on(<Pencil />), <CodeView />, <Magnify />]} />
                    <Counts>Words:2 Characters:9</Counts><Zoom>100%</Zoom>
                    <GripCorner><ResizeGrip /></GripCorner>
                  </StatusBar>
                </Editor>
                <UpdateButton>Update</UpdateButton>
              </WidgetBody>
            </Widget>
          </Content>
          <PageFooter />
        </Page>
        <Scrollbar><ScrollArrow /><Thumb $h={485} /><Filler /><ScrollArrow $down /></Scrollbar>
      </Viewport>
      <Taskbar>
        <StartButton><Windows /></StartButton>
        <TaskButton $mr={3}><Explorer /></TaskButton>
        <TaskButton $on $w={54} $mr={0}><Chrome /></TaskButton><StackEdge />
        <TaskButton><Sublime /></TaskButton>
        <TaskButton><SkypeMark size={32} /></TaskButton>
        <Tray>
          <Up /><Flag /><Power /><Volume /><Signal />
          <TrayText $ml={6}>ENG<br />US</TrayText>
          <TrayText $ml={8}>7:19 PM<br />5/19/2015</TrayText>
        </Tray>
      </Taskbar>
    </Screen>
  );
}
